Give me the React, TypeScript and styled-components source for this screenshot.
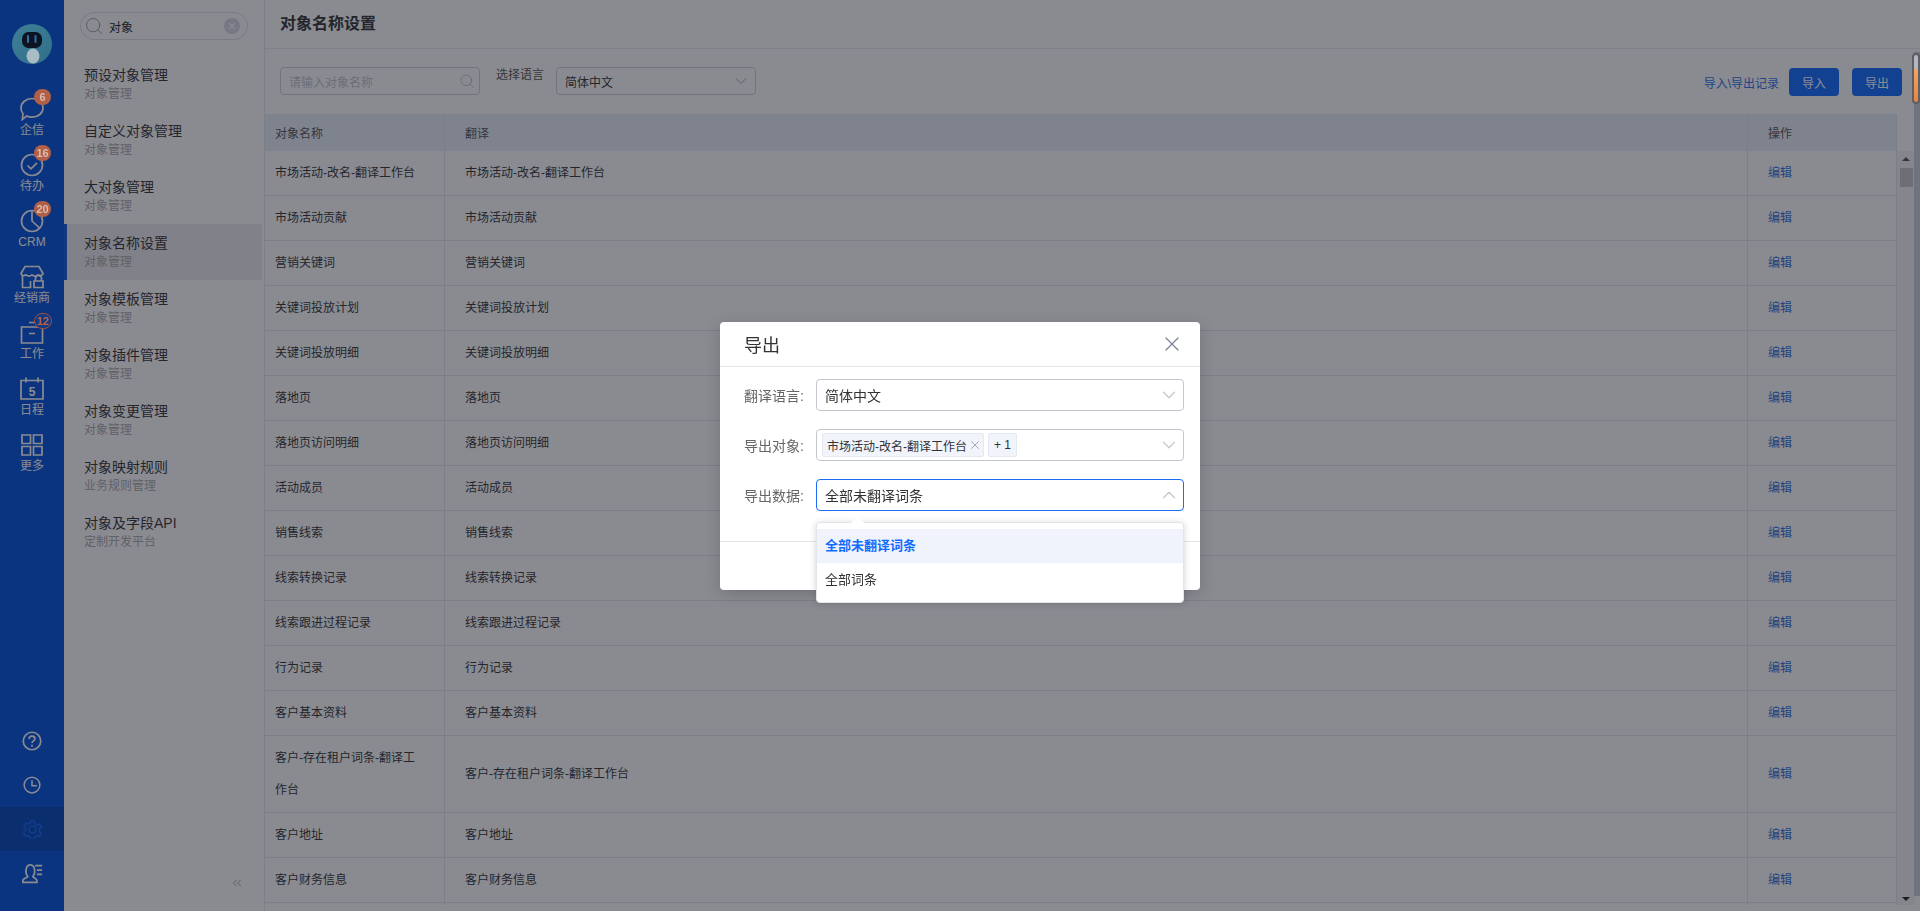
import React from 'react';
import styled, { createGlobalStyle } from 'styled-components';
import { ChevronDown, ChevronUp, ChevronsLeft, Search, X } from 'lucide-react';

const GlobalStyle = createGlobalStyle`
  html, body {
    margin: 0;
    height: 100%;
    overflow: hidden;
    background: #fff;
    font-family: "Liberation Sans", "Noto Sans CJK SC", sans-serif;
    font-size: 12px;
    color: #333;
  }
  * { box-sizing: border-box; }
`;

const Page = styled.div`
  display: flex;
  width: 1920px;
  height: 911px;
  overflow: hidden;
`;

/* left rail */
const Rail = styled.nav`
  display: flex;
  flex-direction: column;
  align-items: stretch;
  flex: 0 0 64px;
  padding: 24px 0 16px;
  background: #0050dd;
`;

const Avatar = styled.svg`
  position: relative;
  z-index: 1001;
  display: block;
  width: 40px;
  height: 40px;
  margin: 0 auto 26px;
`;

const RailItem = styled.div`
  display: flex;
  flex-direction: column;
  align-items: center;
  height: 56px;
  padding-top: 7px;
  color: #fff;
`;

const RailIcon = styled.span`
  position: relative;
  display: block;
  width: 24px;
  height: 24px;
  svg {
    display: block;
    width: 24px;
    height: 24px;
    fill: none;
    stroke: currentColor;
    stroke-width: 1.7;
  }
`;

const RailLabel = styled.span`
  font-size: 12px;
  line-height: 18px;
  color: #fff;
`;

const Badge = styled.span<{ $hollow?: boolean; $left: number; $top: number }>`
  position: absolute;
  z-index: 1001;
  left: ${p => p.$left}px;
  top: ${p => p.$top}px;
  min-width: 17px;
  height: 16px;
  padding: 0 2px;
  border-radius: 8px;
  text-align: center;
  font-size: 11px;
  font-weight: 700;
  line-height: ${p => (p.$hollow ? '14px' : '16px')};
  color: ${p => (p.$hollow ? '#b8634e' : '#d9bcb1')};
  background: ${p => (p.$hollow ? '#0e3a86' : '#b25f47')};
  border: ${p => (p.$hollow ? '1px solid #a54b3a' : 'none')};
`;

const RailBottom = styled.div`
  margin-top: auto;
  display: flex;
  flex-direction: column;
`;

const RailTool = styled.div<{ $active?: boolean; $size: number }>`
  display: flex;
  align-items: center;
  justify-content: center;
  height: 44px;
  color: ${p => (p.$active ? '#0a62f5' : '#fff')};
  background: ${p => (p.$active ? '#0044b9' : 'transparent')};
  svg {
    display: block;
    width: ${p => p.$size}px;
    height: ${p => p.$size}px;
    fill: none;
    stroke: currentColor;
    stroke-width: 2;
  }
`;

/* object menu */
const SideMenu = styled.aside`
  display: flex;
  flex-direction: column;
  flex: 0 0 200px;
  padding-right: 2px;
  background: #fff;
`;

const MenuSearch = styled.div`
  display: flex;
  align-items: center;
  width: 168px;
  height: 28px;
  margin: 12px 0 16px 16px;
  padding: 0 7px 0 3px;
  border: 1px solid #dcdfe6;
  border-radius: 14px;
  font-size: 12px;
  color: #222;
`;

const MenuSearchText = styled.span`
  flex: 1;
  margin-left: 5px;
`;

const ClearIcon = styled.span`
  display: flex;
  align-items: center;
  justify-content: center;
  width: 16px;
  height: 16px;
  border-radius: 50%;
  background: #d5d9e4;
  color: #fff;
`;

const MenuItem = styled.div<{ $active?: boolean }>`
  height: 56px;
  padding: 10px 0 0 20px;
  background: ${p => (p.$active ? '#ebebee' : 'transparent')};
  box-shadow: ${p => (p.$active ? 'inset 3px 0 0 #0a5be0' : 'none')};
`;

const MenuTitle = styled.div`
  font-size: 14px;
  line-height: 18px;
  color: #333;
`;

const MenuSub = styled.div`
  font-size: 12px;
  line-height: 20px;
  color: #aaa;
`;

const Collapse = styled.div`
  display: flex;
  justify-content: flex-end;
  margin-top: auto;
  padding: 0 18px 21px 0;
  color: #666;
`;

/* content */
const Main = styled.main`
  display: flex;
  flex-direction: column;
  flex: 1;
  min-width: 0;
  padding-bottom: 6px;
  border-left: 1px solid #e3e6ee;
`;

const TitleBar = styled.header`
  flex: 0 0 49px;
  padding: 13px 0 0 15px;
  border-bottom: 1px solid #e9ebf0;
  font-size: 16px;
  font-weight: 700;
  line-height: 21px;
  color: #333;
`;

const Toolbar = styled.div`
  display: flex;
  align-items: flex-start;
  flex: 0 0 65px;
  padding: 18px 18px 0 15px;
`;

const Field = styled.div`
  display: flex;
  align-items: center;
  justify-content: space-between;
  width: 200px;
  height: 28px;
  padding: 0 4px 0 8px;
  border: 1px solid #cdd0d8;
  border-radius: 4px;
  font-size: 12px;
  color: #333;
`;

const Placeholder = styled.span`
  color: #c0c4cc;
`;

const FieldLabel = styled.span`
  margin: 0 12px 0 16px;
  line-height: 16px;
  color: #555;
`;

const ToolbarEnd = styled.div`
  display: flex;
  align-items: center;
  margin-left: auto;
  margin-top: 1px;
`;

const TextLink = styled.a`
  margin-right: 10px;
  color: #2a72e8;
`;

const PrimaryButton = styled.button`
  width: 50px;
  height: 28px;
  margin-left: 13px;
  border: 0;
  border-radius: 4px;
  background: #0f6bff;
  color: #fff;
  font: inherit;
  &:first-of-type { margin-left: 0; }
`;

const TableArea = styled.div`
  display: flex;
  flex: 1;
  min-height: 0;
`;

const TableClip = styled.div`
  flex: 0 0 1632px;
  overflow: hidden;
`;

const Table = styled.table`
  width: 1632px;
  table-layout: fixed;
  border-collapse: separate;
  border-spacing: 0;
`;

const HeadCell = styled.th`
  height: 37px;
  padding: 0 10px;
  background: #e8eef7;
  border-right: 1px solid #dfe4ee;
  text-align: left;
  font-weight: 400;
  color: #555;
`;

const Cell = styled.td<{ $tall?: boolean }>`
  height: ${p => (p.$tall ? '77px' : '45px')};
  padding: 0 24px 0 10px;
  border-right: 1px solid #e3e6ee;
  border-bottom: 1px solid #e3e6ee;
  line-height: 32px;
  color: #333;
`;

const WideCell = styled(Cell)`
  padding-left: 20px;
`;

const WideHead = styled(HeadCell)`
  padding-left: 20px;
`;

const EditLink = styled.a`
  color: #2f6fd6;
`;

const TableScroll = styled.div`
  position: relative;
  flex: 0 0 18px;
  margin-top: 37px;
  background: #f4f4f5;
`;

const ScrollThumb = styled.div`
  position: absolute;
  left: 3px;
  top: 17px;
  width: 13px;
  height: 19px;
  background: #c4c4c8;
`;

const ScrollArrow = styled.span<{ $down?: boolean }>`
  position: absolute;
  left: 5px;
  ${p => (p.$down ? 'bottom: 4px;' : 'top: 6px;')}
  border-left: 4px solid transparent;
  border-right: 4px solid transparent;
  ${p => (p.$down ? 'border-top: 4px solid #222;' : 'border-bottom: 4px solid #555;')}
`;

const PageBar = styled.div`
  position: absolute;
  right: 0;
  top: 52px;
  width: 6px;
  height: 844px;
  background: #c8cedd;
`;

const PageThumb = styled.div`
  position: absolute;
  z-index: 1001;
  right: 0;
  top: 53px;
  width: 8px;
  height: 51px;
  border: 2px solid #5c5f66;
  border-radius: 4px;
  background: linear-gradient(#b4b7bf 0 30%, #f2a463 30%, #ea8440 100%);
`;

/* dialog */
const Mask = styled.div`
  position: fixed;
  inset: 0;
  z-index: 1000;
  background: rgba(22, 24, 35, 0.5);
`;

const Modal = styled.section`
  position: fixed;
  z-index: 1001;
  left: 720px;
  top: 322px;
  width: 480px;
  height: 268px;
  border-radius: 4px;
  background: #fff;
  box-shadow: 0 4px 16px rgba(0, 0, 0, 0.18);
`;

const ModalHead = styled.header`
  display: flex;
  align-items: center;
  justify-content: space-between;
  height: 45px;
  padding: 0 16px 0 24px;
  border-bottom: 1px solid #e3e5ea;
  font-size: 18px;
  color: #333;
`;

const CloseIcon = styled(X)`
  color: #7b8494;
`;

const ModalBody = styled.div`
  display: flex;
  flex-direction: column;
  gap: 18px;
  height: 175px;
  padding: 12px 16px 0 24px;
  border-bottom: 1px solid #e3e5ea;
  font-size: 14px;
`;

const FormRow = styled.div`
  display: flex;
  align-items: center;
`;

const FormLabel = styled.label`
  flex: 0 0 72px;
  color: #666;
`;

const SelectBox = styled.div<{ $open?: boolean }>`
  position: relative;
  display: flex;
  align-items: center;
  gap: 4px;
  flex: 1;
  height: 32px;
  padding: 0 8px;
  border: 1px solid ${p => (p.$open ? '#1a6cf5' : '#c3c6ce')};
  border-radius: 4px;
  color: #333;
`;

const Caret = styled.span`
  display: flex;
  margin-left: auto;
  margin-right: -5px;
  color: #c6cad3;
`;

const Tag = styled.span<{ $first?: boolean }>`
  display: inline-flex;
  align-items: center;
  height: 24px;
  padding: ${p => (p.$first ? '0 1px 0 4px' : '0 5px')};
  margin-left: ${p => (p.$first ? '-3px' : '0')};
  border: 1px solid #e4e8f0;
  border-radius: 2px;
  background: #f1f4fb;
  font-size: 12px;
  color: #333;
`;

const TagClose = styled(X)`
  margin-left: 1px;
  color: #9aa0ab;
`;

const Dropdown = styled.div`
  position: absolute;
  left: -1px;
  right: -1px;
  top: 42px;
  height: 81px;
  padding: 6px 0;
  border: 1px solid #e3e5ea;
  border-radius: 4px;
  background: #fff;
  box-shadow: 0 1px 6px rgba(40, 50, 70, 0.22);
  font-size: 13px;
  &::before {
    content: '';
    position: absolute;
    left: 36px;
    top: -5px;
    width: 9px;
    height: 9px;
    background: #fff;
    transform: rotate(45deg);
  }
`;

const Option = styled.div<{ $selected?: boolean }>`
  position: relative;
  height: 34px;
  padding-left: 8px;
  line-height: 34px;
  font-weight: ${p => (p.$selected ? 700 : 400)};
  color: ${p => (p.$selected ? '#0f6bff' : '#333')};
  background: ${p => (p.$selected ? '#f0f3fb' : 'transparent')};
`;

const rows = [
  '市场活动-改名-翻译工作台',
  '市场活动贡献',
  '营销关键词',
  '关键词投放计划',
  '关键词投放明细',
  '落地页',
  '落地页访问明细',
  '活动成员',
  '销售线索',
  '线索转换记录',
  '线索跟进过程记录',
  '行为记录',
  '客户基本资料',
  '客户-存在租户词条-翻译工作台',
  '客户地址',
  '客户财务信息',
];

const menu = [
  ['预设对象管理', '对象管理'],
  ['自定义对象管理', '对象管理'],
  ['大对象管理', '对象管理'],
  ['对象名称设置', '对象管理'],
  ['对象模板管理', '对象管理'],
  ['对象插件管理', '对象管理'],
  ['对象变更管理', '对象管理'],
  ['对象映射规则', '业务规则管理'],
  ['对象及字段API', '定制开发平台'],
];

const App = () => (
  <Page>
    <GlobalStyle />
    <Rail>
      <Avatar viewBox="0 0 40 40">
        <defs>
          <linearGradient id="avatarBg" x1="0" y1="0" x2="1" y2="1">
            <stop offset="0" stopColor="#3f8098" />
            <stop offset="1" stopColor="#2f6f88" />
          </linearGradient>
        </defs>
        <circle cx="20" cy="20" r="20" fill="url(#avatarBg)" />
        <ellipse cx="21" cy="32" rx="6.500" ry="7.500" fill="#a9bcc4" />
        <rect x="10" y="8" width="20" height="16" rx="6.500" fill="#0b1420" />
        <rect x="15" y="11" width="2" height="8" rx="1" fill="#2f6fb0" />
        <rect x="22.500" y="11" width="2" height="8" rx="1" fill="#2f6fb0" />
      </Avatar>
      <RailItem>
        <RailIcon>
          <svg viewBox="0 0 24 24">
            <path d="M12 1.500c6 0 11 4.200 11 9.400s-5 9.300-11 9.300c-1.900 0-3.800-.4-5.300-1.100L2.300 22.500l.7-5.700C1.700 15.200 1 13.100 1 10.900 1 5.700 6 1.500 12 1.500z" />
          </svg>
          <Badge $left={14} $top={-8}>6</Badge>
        </RailIcon>
        <RailLabel>企信</RailLabel>
      </RailItem>
      <RailItem>
        <RailIcon>
          <svg viewBox="0 0 24 24">
            <circle cx="12" cy="12" r="10.500" />
            <path d="M7.500 12.500l3.500 3.300 6-6" />
          </svg>
          <Badge $left={14} $top={-8}>16</Badge>
        </RailIcon>
        <RailLabel>待办</RailLabel>
      </RailItem>
      <RailItem>
        <RailIcon>
          <svg viewBox="0 0 24 24">
            <circle cx="12" cy="12" r="10.500" />
            <path d="M12 1.500V12l7.500 7" />
          </svg>
          <Badge $left={14} $top={-8}>20</Badge>
        </RailIcon>
        <RailLabel>CRM</RailLabel>
      </RailItem>
      <RailItem>
        <RailIcon>
          <svg viewBox="0 0 24 24">
            <path d="M5 1.500h14l4 7c-.5 2-3 2.800-5 1.300-1.700 1.400-4.300 1.400-6 0-1.700 1.400-4.300 1.400-6 0-2 1.500-4.500.7-5-1.300z" />
            <path d="M2.500 11v11.500h8V16M23 22.500h-9v-6.500h9zM15.500 16v-2.500a3 3 0 0 1 6 0V16" />
          </svg>
        </RailIcon>
        <RailLabel>经销商</RailLabel>
      </RailItem>
      <RailItem>
        <RailIcon>
          <svg viewBox="0 0 24 24">
            <path d="M1.500 6h21v16h-21zM9 1.500h10v4.500M9 12.500h6" />
          </svg>
          <Badge $hollow $left={14} $top={-8}>12</Badge>
        </RailIcon>
        <RailLabel>工作</RailLabel>
      </RailItem>
      <RailItem>
        <RailIcon>
          <svg viewBox="0 0 24 24">
            <path d="M1 3.500h22v18.500H1zM6 .5v5M18 .5v5" />
            <text x="12" y="18.500" textAnchor="middle" fontSize="12" fontWeight="700" fill="currentColor" stroke="none">5</text>
          </svg>
        </RailIcon>
        <RailLabel>日程</RailLabel>
      </RailItem>
      <RailItem>
        <RailIcon>
          <svg viewBox="0 0 24 24">
            <path d="M2 2h8.500v8.500H2zM13.500 2H22v8.500h-8.500zM2 13.500h8.500V22H2zM13.500 13.500H22V22h-8.500z" />
          </svg>
        </RailIcon>
        <RailLabel>更多</RailLabel>
      </RailItem>
      <RailBottom>
        <RailTool $size={20}>
          <svg viewBox="0 0 24 24">
            <circle cx="12" cy="12" r="10.500" />
            <path d="M8.500 9.500c0-2 1.600-3.300 3.500-3.300s3.500 1.200 3.500 3c0 2.700-3.500 2.600-3.500 5.300" />
            <path d="M12 16.500v2.500" />
          </svg>
        </RailTool>
        <RailTool $size={18}>
          <svg viewBox="0 0 24 24">
            <circle cx="12" cy="12" r="10.500" />
            <path d="M12 5.500V13h6.500" />
          </svg>
        </RailTool>
        <RailTool $active $size={19}>
          <svg viewBox="0 0 24 24">
            <path d="M9.800 1.500h4.400l.8 3 2.800 1.600 3-.8 2.200 3.800-2.200 2.200v3.300l2.200 2.200-2.200 3.800-3-.8-2.800 1.600-.8 3H9.800l-.8-3-2.800-1.600-3 .8L1 15.800l2.200-2.200v-3.300L1 8.100l2.200-3.800 3 .8L9 4.500z" />
            <circle cx="12" cy="12" r="4.500" />
          </svg>
        </RailTool>
        <RailTool $size={21}>
          <svg viewBox="0 0 24 24">
            <path d="M1 22v-2c0-2 3.800-2.700 5.500-4.200 0-1-1.500-2.300-1.800-4.300C4 6.500 5.500 2 9.500 2s5.500 4.500 4.800 9.500c-.3 2-1.800 3.300-1.800 4.300 1.700 1.500 4.500 2.200 4.500 4.200v2z" />
            <path d="M15 3h8M17 8h6M17 13h6" />
          </svg>
        </RailTool>
      </RailBottom>
    </Rail>

    <SideMenu>
      <MenuSearch>
        <Search size={20} strokeWidth={1} color="#8b8f98" />
        <MenuSearchText>对象</MenuSearchText>
        <ClearIcon>
          <X size={10} strokeWidth={3} />
        </ClearIcon>
      </MenuSearch>
      {menu.map(([title, sub]) => (
        <MenuItem key={title} $active={title === '对象名称设置'}>
          <MenuTitle>{title}</MenuTitle>
          <MenuSub>{sub}</MenuSub>
        </MenuItem>
      ))}
      <Collapse>
        <ChevronsLeft size={14} strokeWidth={1} />
      </Collapse>
    </SideMenu>

    <Main>
      <TitleBar>对象名称设置</TitleBar>
      <Toolbar>
        <Field>
          <Placeholder>请输入对象名称</Placeholder>
          <Search size={16} strokeWidth={1.2} color="#b5b8c0" />
        </Field>
        <FieldLabel>选择语言</FieldLabel>
        <Field>
          简体中文
          <ChevronDown size={20} strokeWidth={1.2} color="#a8acb5" />
        </Field>
        <ToolbarEnd>
          <TextLink>导入\导出记录</TextLink>
          <PrimaryButton>导入</PrimaryButton>
          <PrimaryButton>导出</PrimaryButton>
        </ToolbarEnd>
      </Toolbar>
      <TableArea>
        <TableClip>
          <Table>
            <colgroup>
              <col width={180} />
              <col width={1303} />
              <col width={149} />
            </colgroup>
            <thead>
              <tr>
                <HeadCell>对象名称</HeadCell>
                <WideHead>翻译</WideHead>
                <WideHead>操作</WideHead>
              </tr>
            </thead>
            <tbody>
              {rows.map(name => {
                const tall = name.length > 14;
                return (
                  <tr key={name}>
                    <Cell $tall={tall}>{name}</Cell>
                    <WideCell $tall={tall}>{name}</WideCell>
                    <WideCell $tall={tall}>
                      <EditLink>编辑</EditLink>
                    </WideCell>
                  </tr>
                );
              })}
              <tr>
                <Cell />
                <WideCell />
                <WideCell />
              </tr>
            </tbody>
          </Table>
        </TableClip>
        <TableScroll>
          <ScrollArrow />
          <ScrollThumb />
          <ScrollArrow $down />
        </TableScroll>
      </TableArea>
    </Main>
    <PageBar />
    <PageThumb />

    <Mask />
    <Modal>
      <ModalHead>
        导出
        <CloseIcon size={24} strokeWidth={1.3} />
      </ModalHead>
      <ModalBody>
        <FormRow>
          <FormLabel>翻译语言:</FormLabel>
          <SelectBox>
            简体中文
            <Caret>
              <ChevronDown size={22} strokeWidth={1.5} />
            </Caret>
          </SelectBox>
        </FormRow>
        <FormRow>
          <FormLabel>导出对象:</FormLabel>
          <SelectBox>
            <Tag $first>
              市场活动-改名-翻译工作台
              <TagClose size={14} strokeWidth={1.5} />
            </Tag>
            <Tag>+ 1</Tag>
            <Caret>
              <ChevronDown size={22} strokeWidth={1.5} />
            </Caret>
          </SelectBox>
        </FormRow>
        <FormRow>
          <FormLabel>导出数据:</FormLabel>
          <SelectBox $open>
            全部未翻译词条
            <Caret>
              <ChevronUp size={22} strokeWidth={1.5} />
            </Caret>
            <Dropdown>
              <Option $selected>全部未翻译词条</Option>
              <Option>全部词条</Option>
            </Dropdown>
          </SelectBox>
        </FormRow>
      </ModalBody>
    </Modal>
  </Page>
);

export default App;
